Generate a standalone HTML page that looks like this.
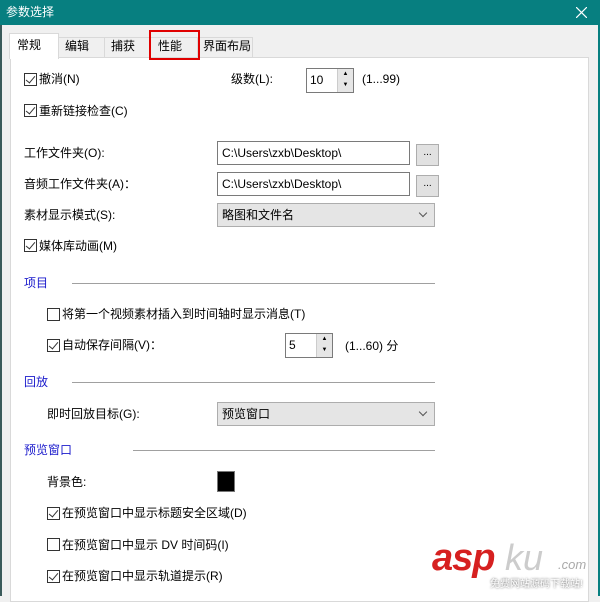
<!DOCTYPE html>
<html><head><meta charset="utf-8"><style>
*{margin:0;padding:0;box-sizing:border-box}
body{width:600px;height:596px;overflow:hidden;background:#f0f0f0;font-family:"Liberation Sans","Noto Sans CJK SC",sans-serif;font-size:12px;color:#000;position:relative}
.a{position:absolute;white-space:nowrap;line-height:14px}
.title{position:absolute;left:0;top:0;width:600px;height:25px;background:#077f80;color:#fff}
.tab{position:absolute;top:37px;height:21px;border:1px solid #d9d9d9;border-bottom:none;background:#f0f0f0;padding:1px 0 0 6px;line-height:14px}
.panel{position:absolute;left:10px;top:57px;width:579px;height:545px;background:#fff;border:1px solid #d9d9d9}
.cb{position:absolute;width:13px;height:13px;border:1px solid #333;background:#fff}
.cb.c::after{content:"";position:absolute;left:3px;top:0px;width:4px;height:8px;border:solid #333;border-width:0 1.3px 1.3px 0;transform:rotate(40deg)}
.inp{position:absolute;height:24px;border:1px solid #7a7a7a;background:#fff;padding:4px 0 0 4px;line-height:14px}
.btn{position:absolute;width:23px;height:22px;border:1px solid #adadad;background:#e1e1e1;text-align:center;line-height:16px;font-size:10px}
.dd{position:absolute;height:24px;border:1px solid #adadad;background:#e5e5e5;padding:4px 0 0 4px;line-height:14px}
.dd::after{content:"";position:absolute;right:8px;top:6px;width:5px;height:5px;border:solid #555;border-width:0 1px 1px 0;transform:rotate(45deg)}
.sp{position:absolute;height:25px;border:1px solid #7a7a7a;background:#fff;padding:4px 0 0 3px;line-height:14px}
.spb{position:absolute;right:0;top:0;width:16px;height:23px;background:#e6e6e6;border-left:1px solid #ccc;font-size:6px;line-height:11px;text-align:center;color:#000}
.hd{position:absolute;color:#1a1acc;line-height:14px}
.ln{position:absolute;height:1px;background:#a0a0a0}
</style></head><body>
<div class="title"><span class="a" style="left:6px;top:5px;color:#fff">参数选择</span>
<svg style="position:absolute;left:576px;top:7px" width="11" height="11"><path d="M0 0L11 11M11 0L0 11" stroke="#fff" stroke-width="1.2"/></svg></div>
<div style="position:absolute;left:598px;top:25px;width:2px;height:571px;background:#077f80"></div>
<div style="position:absolute;left:0;top:25px;width:2px;height:571px;background:#3a5a5a"></div>
<div class="tab" style="left:58px;width:47px">编辑</div>
<div class="tab" style="left:104px;width:46px">捕获</div>
<div class="tab" style="left:149px;width:49px;padding-left:8px">性能</div>
<div class="tab" style="left:197px;width:56px;padding-left:5px">界面布局</div>
<div class="panel"></div>
<div class="tab" style="left:9px;top:33px;height:26px;width:50px;background:#fff;padding:4px 0 0 7px">常规</div>
<div style="position:absolute;left:149px;top:30px;width:51px;height:30px;border:2px solid #e00000"></div>

<div class="cb c" style="left:24px;top:73px"></div><span class="a" style="left:39px;top:72px">撤消(N)</span>
<span class="a" style="left:231px;top:72px">级数(L):</span>
<div class="sp" style="left:306px;top:68px;width:48px">10<div class="spb">▲<br>▼</div></div>
<span class="a" style="left:362px;top:72px">(1...99)</span>
<div class="cb c" style="left:24px;top:104px"></div><span class="a" style="left:39px;top:104px">重新链接检查(C)</span>

<span class="a" style="left:24px;top:146px">工作文件夹(O):</span>
<div class="inp" style="left:217px;top:141px;width:193px">C:\Users\zxb\Desktop\</div>
<div class="btn" style="left:416px;top:144px">...</div>
<span class="a" style="left:24px;top:177px">音频工作文件夹(A)：</span>
<div class="inp" style="left:217px;top:172px;width:193px">C:\Users\zxb\Desktop\</div>
<div class="btn" style="left:416px;top:175px">...</div>
<span class="a" style="left:24px;top:208px">素材显示模式(S):</span>
<div class="dd" style="left:217px;top:203px;width:218px">略图和文件名</div>
<div class="cb c" style="left:24px;top:239px"></div><span class="a" style="left:39px;top:239px">媒体库动画(M)</span>

<span class="hd" style="left:24px;top:276px">项目</span><div class="ln" style="left:72px;top:283px;width:363px"></div>
<div class="cb" style="left:47px;top:308px"></div><span class="a" style="left:62px;top:307px">将第一个视频素材插入到时间轴时显示消息(T)</span>
<div class="cb c" style="left:47px;top:339px"></div><span class="a" style="left:62px;top:338px">自动保存间隔(V)：</span>
<div class="sp" style="left:285px;top:333px;width:48px">5<div class="spb">▲<br>▼</div></div>
<span class="a" style="left:345px;top:339px">(1...60) 分</span>

<span class="hd" style="left:24px;top:375px">回放</span><div class="ln" style="left:72px;top:382px;width:363px"></div>
<span class="a" style="left:47px;top:407px">即时回放目标(G):</span>
<div class="dd" style="left:217px;top:402px;width:218px">预览窗口</div>

<span class="hd" style="left:24px;top:443px">预览窗口</span><div class="ln" style="left:133px;top:450px;width:302px"></div>
<span class="a" style="left:47px;top:475px">背景色:</span>
<div style="position:absolute;left:217px;top:471px;width:18px;height:21px;background:#000;border:1px solid #777"></div>
<div class="cb c" style="left:47px;top:507px"></div><span class="a" style="left:62px;top:506px">在预览窗口中显示标题安全区域(D)</span>
<div class="cb" style="left:47px;top:538px"></div><span class="a" style="left:62px;top:538px">在预览窗口中显示 DV 时间码(I)</span>
<div class="cb c" style="left:47px;top:570px"></div><span class="a" style="left:62px;top:569px">在预览窗口中显示轨道提示(R)</span>

<span class="a" style="left:432px;top:538px;font:italic bold 38px 'Liberation Sans',sans-serif;color:#d62020;line-height:40px;letter-spacing:-1px">asp</span>
<span class="a" style="left:505px;top:538px;font:italic 36px 'Liberation Sans',sans-serif;color:#ccc;line-height:40px">ku</span>
<span class="a" style="left:558px;top:557px;font:italic 13px 'Liberation Sans',sans-serif;color:#aaa">.com</span>
<span class="a" style="left:490px;top:578px;font-size:10px;color:#fff;text-shadow:0 0 2px #555">免费网站源码下载站!</span>
</body></html>
